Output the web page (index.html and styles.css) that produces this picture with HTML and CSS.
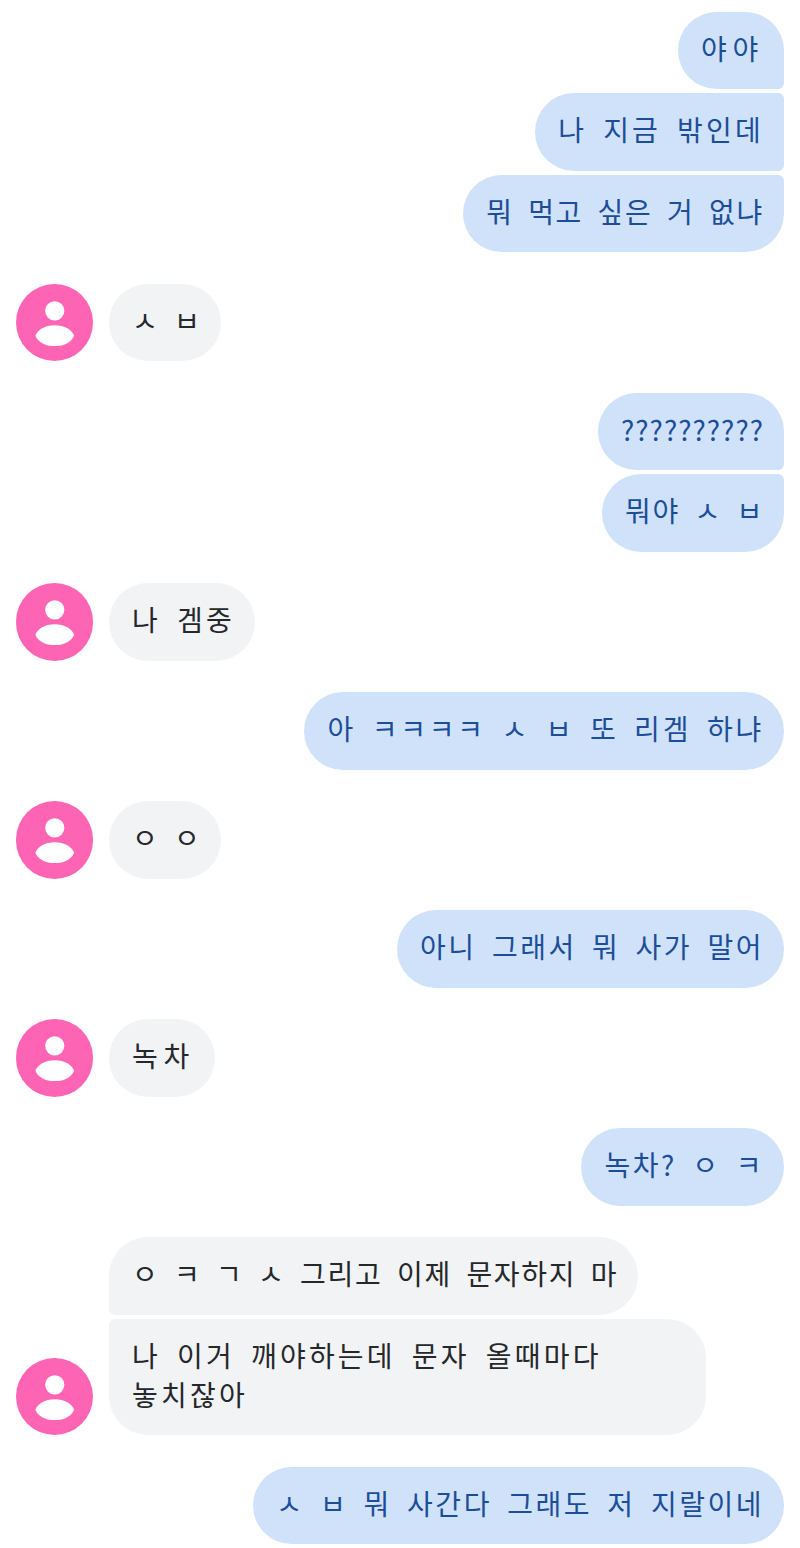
FILE: index.html
```html
<!DOCTYPE html>
<html lang="ko">
<head>
<meta charset="utf-8">
<title>문자</title>
<link rel="stylesheet" href="styles.css">
</head>
<body>
<svg class="defs" width="0" height="0" aria-hidden="true">
  <symbol id="person" viewBox="0 0 78 78">
    <circle cx="39" cy="27" r="9.700" fill="#fff"/>
    <path d="M19.500 52C22 46 29 41.500 39 41.500S56 46 58.500 52C56 58 49 62.500 39 62.500S22 58 19.500 52Z" fill="#fff"/>
  </symbol>
</svg>
<main class="chat">
  <section class="group sent">
    <p class="bubble first loose">야야</p>
    <p class="bubble middle">나 지금 밖인데</p>
    <p class="bubble last tight">뭐 먹고 싶은 거 없냐</p>
  </section>
  <section class="group received">
    <svg class="avatar"><use href="#person"/></svg>
    <div class="stack"><p class="bubble tight">ㅅ ㅂ</p></div>
  </section>
  <section class="group sent">
    <p class="bubble first tighter">??????????</p>
    <p class="bubble last tight">뭐야 ㅅ ㅂ</p>
  </section>
  <section class="group received">
    <svg class="avatar"><use href="#person"/></svg>
    <div class="stack"><p class="bubble">나 겜중</p></div>
  </section>
  <section class="group sent">
    <p class="bubble easy">아 ㅋㅋㅋㅋ ㅅ ㅂ 또 리겜 하냐</p>
  </section>
  <section class="group received">
    <svg class="avatar"><use href="#person"/></svg>
    <div class="stack"><p class="bubble tight">ㅇ ㅇ</p></div>
  </section>
  <section class="group sent">
    <p class="bubble snug">아니 그래서 뭐 사가 말어</p>
  </section>
  <section class="group received">
    <svg class="avatar"><use href="#person"/></svg>
    <div class="stack"><p class="bubble loose">녹차</p></div>
  </section>
  <section class="group sent">
    <p class="bubble snug">녹차? ㅇ ㅋ</p>
  </section>
  <section class="group received">
    <svg class="avatar"><use href="#person"/></svg>
    <div class="stack">
      <p class="bubble first tight">ㅇ ㅋ ㄱ ㅅ 그리고 이제 문자하지 마</p>
      <p class="bubble last">나 이거 깨야하는데 문자 올때마다 놓치잖아</p>
    </div>
  </section>
  <section class="group sent">
    <p class="bubble snug">ㅅ ㅂ 뭐 사간다 그래도 저 지랄이네</p>
  </section>
</main>
</body>
</html>
```
FILE: styles.css
```css
html, body {
  margin: 0;
  background: #fff;
}

.defs {
  position: absolute;
}

.chat {
  display: flex;
  flex-direction: column;
  gap: 31.5px;
  padding: 11.5px 16px 0 15.5px;
  font-family: "Noto Sans CJK KR", sans-serif;
  font-size: 28px;
  line-height: 39px;
  letter-spacing: 3.2px;
  word-spacing: 5px;
}

.group {
  display: flex;
  gap: 4px;
}

.bubble {
  margin: 0;
  padding: 17px 20px 21.5px 23px;
  border-radius: 39px;
  width: fit-content;
  max-width: 597px;
  box-sizing: border-box;
  word-break: keep-all;
}

.loose {
  letter-spacing: 5.7px;
}

.easy {
  letter-spacing: 2.8px;
}

.snug {
  letter-spacing: 2.5px;
}

.tight {
  letter-spacing: 1.7px;
}

.tighter {
  letter-spacing: 1px;
}

.sent {
  flex-direction: column;
  align-items: flex-end;
}

.sent .bubble {
  background: #cfe2f9;
  color: #1c4e98;
}

.sent .first {
  border-bottom-right-radius: 6px;
}

.sent .middle {
  border-top-right-radius: 6px;
  border-bottom-right-radius: 6px;
}

.sent .last {
  border-top-right-radius: 6px;
}

.received {
  align-items: flex-end;
  gap: 16px;
}

.received .bubble {
  background: #f1f3f5;
  color: #25272b;
}

.received .first {
  border-bottom-left-radius: 6px;
}

.received .last {
  border-top-left-radius: 6px;
}

.stack {
  display: flex;
  flex-direction: column;
  gap: 4px;
}

.avatar {
  flex: none;
  width: 77.5px;
  height: 77.5px;
  border-radius: 50%;
  background: #fd64b4;
}
```
